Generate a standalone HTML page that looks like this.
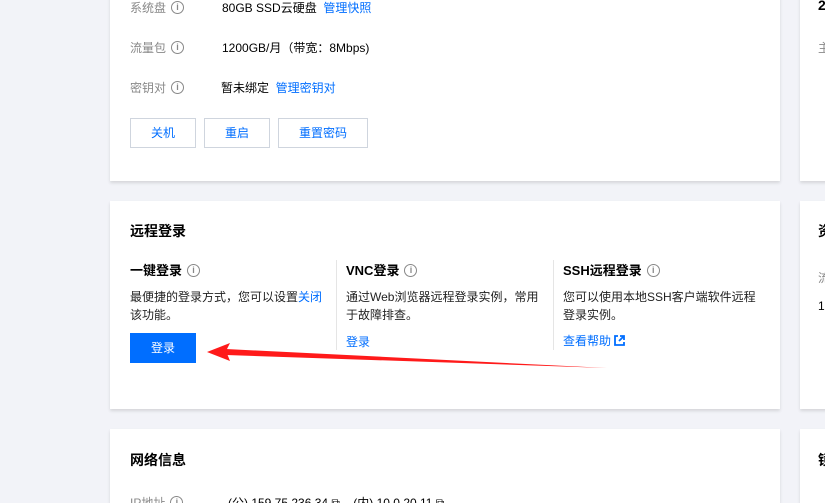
<!DOCTYPE html>
<html style="overflow:hidden;width:825px;height:503px"><head><meta charset="utf-8"><style>
*{margin:0;padding:0;box-sizing:border-box}
body{width:825px;height:503px;overflow:hidden;background:#f2f3f8;font-family:"Liberation Sans","Noto Sans CJK SC",sans-serif;font-size:12px;color:#000;position:relative;line-height:16px}
.card{position:absolute;background:#fff;box-shadow:0 2px 3px rgba(0,0,0,0.12)}
.abs{position:absolute;white-space:nowrap}
.lbl{color:#888}
.i{display:inline-block;width:13px;height:13px;border:1.3px solid #888;border-radius:50%;color:#888;font-size:9px;line-height:11px;text-align:center;font-weight:bold;vertical-align:middle;margin-left:5px;margin-top:-3px}
.lnk{color:#006eff}
.btn{position:absolute;height:30px;border:1px solid #cfd5de;color:#006eff;text-align:center;line-height:28px;background:#fff}
.t{font-weight:bold;font-size:14px}
.sub{font-size:13px;font-weight:bold}
.p{position:absolute;font-size:12px;line-height:18px;color:#222}
</style></head><body>
<div class="card" style="left:110px;top:-10px;width:670px;height:191px"></div>
<div class="card" style="left:800px;top:-10px;width:40px;height:191px"></div>
<div class="card" style="left:110px;top:201px;width:670px;height:208px"></div>
<div class="card" style="left:800px;top:201px;width:40px;height:208px"></div>
<div class="card" style="left:110px;top:429px;width:670px;height:74px"></div>
<div class="card" style="left:800px;top:429px;width:40px;height:74px"></div>

<div class="abs lbl" style="left:130px;top:0px">系统盘<span class="i">i</span></div>
<div class="abs" style="left:222px;top:0px">80GB SSD云硬盘 <span class="lnk">&nbsp;管理快照</span></div>
<div class="abs lbl" style="left:130px;top:40px">流量包<span class="i">i</span></div>
<div class="abs" style="left:222px;top:40px">1200GB/月（带宽：8Mbps)</div>
<div class="abs lbl" style="left:130px;top:80px">密钥对<span class="i">i</span></div>
<div class="abs" style="left:221px;top:80px">暂未绑定 <span class="lnk">&nbsp;管理密钥对</span></div>
<div class="btn" style="left:130px;top:118px;width:66px">关机</div>
<div class="btn" style="left:204px;top:118px;width:66px">重启</div>
<div class="btn" style="left:278px;top:118px;width:90px">重置密码</div>

<div class="abs t" style="left:130px;top:223px">远程登录</div>
<div class="abs sub" style="left:130px;top:263px">一键登录<span class="i">i</span></div>
<div class="abs sub" style="left:346px;top:263px">VNC登录<span class="i">i</span></div>
<div class="abs sub" style="left:563px;top:263px">SSH远程登录<span class="i">i</span></div>
<div style="position:absolute;left:336px;top:260px;width:1px;height:90px;background:#e5e5e5"></div>
<div style="position:absolute;left:553px;top:260px;width:1px;height:90px;background:#e5e5e5"></div>
<div class="p" style="left:130px;top:288px;width:200px;white-space:normal">最便捷的登录方式，您可以设置<span class="lnk">关闭</span>该功能。</div>
<div class="p" style="left:346px;top:288px;width:200px;white-space:normal">通过Web浏览器远程登录实例，常用于故障排查。</div>
<div class="p" style="left:563px;top:288px;width:200px;white-space:normal">您可以使用本地SSH客户端软件远程登录实例。</div>
<div class="abs" style="left:130px;top:333px;width:66px;height:30px;background:#006eff;color:#fff;text-align:center;line-height:30px">登录</div>
<div class="abs lnk" style="left:346px;top:334px">登录</div>
<div class="abs lnk" style="left:563px;top:333px">查看帮助 <svg width="11" height="11" viewBox="0 0 11 11" style="vertical-align:-1px"><path d="M4 1H1v9h9V7" fill="none" stroke="#006eff" stroke-width="1.8"/><path d="M6 1h4v4M10 1L5 6" fill="none" stroke="#006eff" stroke-width="1.8"/></svg></div>
<svg class="abs" style="left:0;top:0" width="825" height="503"><path d="M226 349 L607 368 L226 355 Z" fill="#ff1a1a"/><path d="M207 352 L230 343 L226 351 L230 361 Z" fill="#ff1a1a"/></svg>

<div class="abs t" style="left:130px;top:452px">网络信息</div>
<div class="abs lbl" style="left:130px;top:495px">IP地址<span class="i">i</span></div>
<div class="abs" style="left:228px;top:495px">(公) 159.75.236.34 ⧉ &nbsp;&nbsp;&nbsp;(内) 10.0.20.11 ⧉</div>

<div class="abs t" style="left:818px;top:-3px">2</div>
<div class="abs lbl" style="left:818px;top:40px">主</div>
<div class="abs t" style="left:818px;top:223px">资</div>
<div class="abs lbl" style="left:818px;top:270px">流</div>
<div class="abs" style="left:818px;top:298px">1</div>
<div class="abs t" style="left:818px;top:452px">镜</div>
</body></html>
